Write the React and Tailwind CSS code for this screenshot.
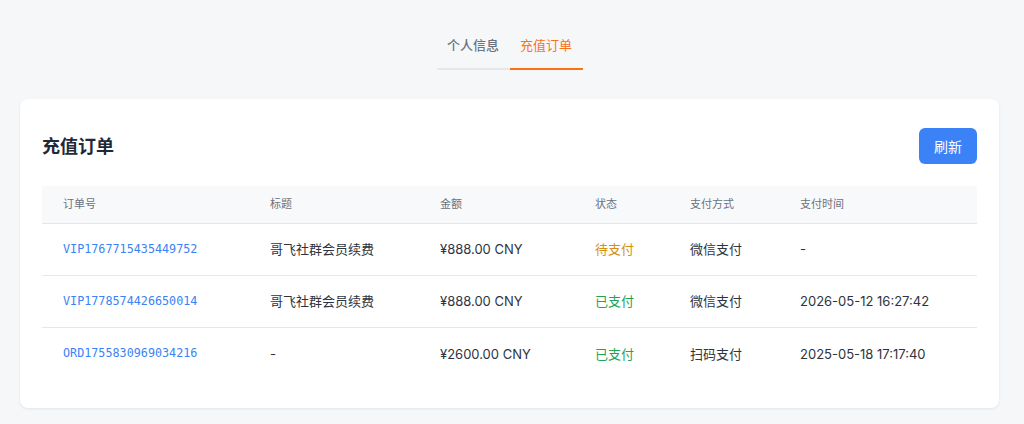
import { useState } from 'react'

const orders = [
  { id: 'VIP1767715435449752', title: '哥飞社群会员续费', amount: '¥888.00 CNY', status: 'pending', method: '微信支付', paidAt: '-' },
  { id: 'VIP1778574426650014', title: '哥飞社群会员续费', amount: '¥888.00 CNY', status: 'paid', method: '微信支付', paidAt: '2026-05-12 16:27:42' },
  { id: 'ORD1755830969034216', title: '-', amount: '¥2600.00 CNY', status: 'paid', method: '扫码支付', paidAt: '2025-05-18 17:17:40' },
]

const tabs = [
  { key: 'profile', label: '个人信息' },
  { key: 'orders', label: '充值订单' },
]

function StatusText({ status }) {
  if (status === 'paid') return <span className="text-[#22a455]">已支付</span>
  return <span className="text-[#d4900f]">待支付</span>
}

export default function App() {
  const [tab, setTab] = useState('orders')

  return (
    <div
      className="min-h-screen bg-[#f6f7f9] pl-5 pr-[25px] pt-[33px] pb-4 text-[#1f2937]"
      style={{ fontFamily: 'Inter, "Noto Sans CJK SC", sans-serif' }}
    >
      {/* Tab switcher */}
      <div className="flex justify-center">
        {tabs.map((t) => (
          <button
            key={t.key}
            onClick={() => setTab(t.key)}
            className={`w-[73px] h-[37px] text-[13px] border-b-2 pb-[9px] ${
              tab === t.key
                ? 'border-[#f97316] text-[#f97316]'
                : 'border-[#e5e7eb] text-[#6b7280] font-medium'
            }`}
          >
            {t.label}
          </button>
        ))}
      </div>

      {/* Orders card */}
      <div className="mt-[29px] bg-white rounded-lg shadow-[0_1px_3px_rgba(0,0,0,0.08)] px-[22px] pt-[29px] pb-[29px]">
        <div className="flex items-center justify-between mb-[22px]">
          <h2 className="text-[18px] font-bold text-[#1f2937]">充值订单</h2>
          <button className="w-[58px] h-[36px] rounded-md bg-[#3b82f6] text-white text-[14px]">
            刷新
          </button>
        </div>

        <table className="w-full text-left border-collapse">
          <colgroup>
            <col className="w-[207px]" />
            <col className="w-[170px]" />
            <col className="w-[155px]" />
            <col className="w-[95px]" />
            <col className="w-[110px]" />
            <col />
          </colgroup>
          <thead>
            <tr className="bg-[#f8f9fb] border-b border-[#e5e7eb] h-[37px] text-[11px] text-[#6b7280]">
              <th className="pl-[21px] font-normal">订单号</th>
              <th className="pl-[21px] font-normal">标题</th>
              <th className="pl-[21px] font-normal">金额</th>
              <th className="pl-[21px] font-normal">状态</th>
              <th className="pl-[21px] font-normal">支付方式</th>
              <th className="pl-[21px] font-normal">支付时间</th>
            </tr>
          </thead>
          <tbody className="text-[13px] text-[#2d3440]">
            {orders.map((o, i) => (
              <tr key={o.id} className={`h-[52px] ${i < orders.length - 1 ? 'border-b border-[#e5e7eb]' : ''}`}>
                <td
                  className="pl-[21px] pt-[2px] text-[11.75px] text-[#3b82f6]"
                  style={{ fontFamily: '"DejaVu Sans Mono", monospace' }}
                >
                  {o.id}
                </td>
                <td className="pl-[21px] pt-[2px]">{o.title}</td>
                <td className="pl-[21px] pt-[2px]">{o.amount}</td>
                <td className="pl-[21px] pt-[2px]"><StatusText status={o.status} /></td>
                <td className="pl-[21px] pt-[2px]">{o.method}</td>
                <td className="pl-[21px] pt-[2px]">{o.paidAt}</td>
              </tr>
            ))}
          </tbody>
        </table>
      </div>
    </div>
  )
}
